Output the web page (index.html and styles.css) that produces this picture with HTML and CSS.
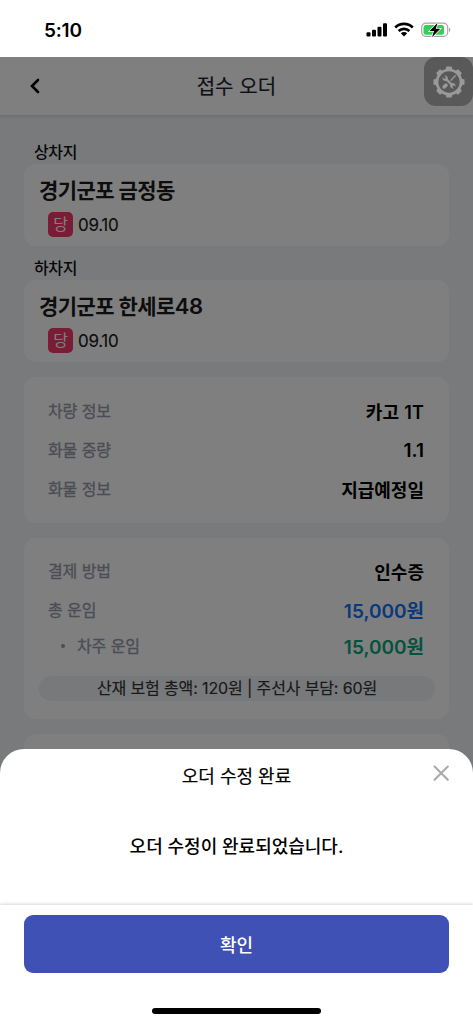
FILE: index.html
```
<!DOCTYPE html>
<html lang="ko">
<head>
<meta charset="utf-8">
<title>접수 오더</title>
<link rel="stylesheet" href="styles.css">
</head>
<body>
<div class="phone">
  <div class="status">
    <span class="time">5:10</span>
    <div class="status-icons">
      <svg width="22" height="14" viewBox="0 0 22 14"><rect x="0.5" y="9.2" width="4" height="4.3" rx="1"/><rect x="6" y="6.8" width="4" height="6.7" rx="1"/><rect x="11.5" y="3.8" width="4" height="9.7" rx="1"/><rect x="17" y="0.2" width="4" height="13.3" rx="1"/></svg>
      <svg class="wifi" width="20" height="15" viewBox="0 0 20 15"><g fill="none" stroke="#000" stroke-width="2.6"><path d="M1.2 5.5C6.1 .7 13.9 .7 18.8 5.5"/><path d="M4.6 9C7.7 6.1 12.3 6.1 15.4 9"/></g><path d="M6.8 11.2C8.6 9.6 11.4 9.6 13.2 11.2L10 14.4Z"/></svg>
      <svg class="battery" width="30" height="16" viewBox="0 0 30 16"><rect x=".7" y="1.2" width="26" height="13.2" rx="4.2" fill="#fff" stroke="#a6a6a6" stroke-width="1.2"/><rect x="2.5" y="3" width="20.5" height="9.7" rx="2.5" fill="#35cd5c"/><path d="M28 5.7V9.9C29 9.5 29.4 8.8 29.4 7.8S29 6.1 28 5.7Z" fill="#a6a6a6"/><path d="M16.7 .7L8.5 9H13L11 15.3L19.3 6.8H14.7Z" stroke="#fff" stroke-width="1.4" paint-order="stroke"/></svg>
    </div>
  </div>

  <div class="app">
    <header class="header">
      <svg class="back" width="10" height="16" viewBox="0 0 10 16"><path d="M8 2L2 8L8 14" fill="none" stroke="#000" stroke-width="2.6" stroke-linecap="round"/></svg>
      <h1 class="title">접수 오더</h1>
    </header>
    <main class="content">
      <h2 class="section-label">상차지</h2>
      <section class="card place">
        <div class="address">경기군포 금정동</div>
        <div class="date-row"><span class="badge">당</span><span class="date">09.10</span></div>
      </section>
      <h2 class="section-label second">하차지</h2>
      <section class="card place">
        <div class="address">경기군포 한세로<span class="num">48</span></div>
        <div class="date-row"><span class="badge">당</span><span class="date">09.10</span></div>
      </section>
      <section class="card info">
        <div class="row"><span class="label">차량 정보</span><span class="value vehicle">카고 1T</span></div>
        <div class="row"><span class="label">화물 중량</span><span class="value weight">1.1</span></div>
        <div class="row"><span class="label">화물 정보</span><span class="value">지급예정일</span></div>
      </section>
      <section class="card payment">
        <div class="row"><span class="label">결제 방법</span><span class="value">인수증</span></div>
        <div class="row"><span class="label">총 운임</span><span class="value money blue">15,000원</span></div>
        <div class="row sub"><span class="label item">차주 운임</span><span class="value money green">15,000원</span></div>
        <div class="insurance">산재 보험 총액: 120원 | 주선사 부담: 60원</div>
      </section>
      <section class="card next"></section>
    </main>
    <div class="overlay"></div>
    <div class="tools">
      <svg width="32" height="32" viewBox="-16 -16 32 32">
        <circle r="12" fill="none" stroke="#999" stroke-width="2.7"/>
        <g fill="#999">
          <path id="tooth" d="M-3.6 -12L-2.6 -15.5H2.6L3.6 -12Z"/>
          <use href="#tooth" transform="rotate(45)"/><use href="#tooth" transform="rotate(90)"/><use href="#tooth" transform="rotate(135)"/><use href="#tooth" transform="rotate(180)"/><use href="#tooth" transform="rotate(225)"/><use href="#tooth" transform="rotate(270)"/><use href="#tooth" transform="rotate(315)"/>
        </g>
        <path d="M-3 -3L4 4" stroke="#999" stroke-width="2.4"/>
        <path d="M-6.5 -4.8L-4.6 -3.1L-3 -4.6L-4.8 -6.5C-2.6 -7 -.6 -5.2 -1.2 -2.7L-2.8 -1.2C-5 -.6 -7 -2.4 -6.5 -4.8ZM6.5 4.8L4.6 3.1L3 4.6L4.8 6.5C2.6 7 .6 5.2 1.2 2.7L2.8 1.2C5 .6 7 2.4 6.5 4.8Z" fill="#999"/>
        <path d="M6.3 -6.3L2 -1.8" stroke="#999" stroke-width="1.3" stroke-linecap="round"/>
        <path d="M-3 3.2L-4.8 4.9" stroke="#999" stroke-width="3.6" stroke-linecap="round"/>
      </svg>
    </div>
  </div>

  <div class="sheet">
    <div class="sheet-head">오더 수정 완료
      <svg class="close" width="16" height="16" viewBox="0 0 16 16"><path d="M1.6 1.6L14.8 14.8M14.8 1.6L1.6 14.8" stroke="#aaa" stroke-width="2.1" stroke-linecap="round"/></svg>
    </div>
    <div class="message">오더 수정이 완료되었습니다.</div>
    <div class="footer">
      <button class="confirm">확인</button>
      <div class="home"></div>
    </div>
  </div>
</div>
</body>
</html>
```
FILE: styles.css
```
* { box-sizing: border-box; }
body { margin: 0; font-family: Inter, "Noto Sans CJK KR", sans-serif; color: #000; background: #fff; }
h1, h2 { margin: 0; }
.phone { position: relative; width: 473px; height: 1024px; overflow: hidden; display: flex; flex-direction: column; }

.status { height: 57px; flex: none; display: flex; justify-content: space-between; padding: 18px 22px 0 44px; }
.time { font-size: 19px; line-height: 25px; font-weight: 600; letter-spacing: -.2px; }
.status-icons { display: flex; align-items: flex-start; padding-top: 5px; }
.wifi { margin: -1px 0 0 6px; }
.battery { margin: -1px 0 0 7px; }

.app { position: relative; flex: 1; background: #f2f4f8; overflow: hidden; }
.header { height: 58px; background: #fff; display: flex; align-items: center; justify-content: center; position: relative; box-shadow: 0 1px 3px rgba(0,0,0,.14); }
.back { position: absolute; left: 30px; top: 21px; }
.title { padding-top: 1px; font-size: 20px; font-weight: 400; line-height: 30px; color: #1c2230; letter-spacing: .1px; -webkit-text-stroke: .2px; }
.content { padding: 26px 24px 0; }
.section-label { font-size: 16px; font-weight: 500; line-height: 23px; padding-left: 10px; letter-spacing: -.4px; color: #111; }
.section-label.second { margin-top: 11px; }
.card { background: #fff; border-radius: 12px; }
.place { height: 82px; padding: 11px 15px 0; }
.address { font-size: 21px; line-height: 32px; font-weight: 600; letter-spacing: -.6px; color: #1a1a1a; }
.num { font-size: 22px; letter-spacing: -.3px; line-height: 1; }
.date-row { display: flex; align-items: center; gap: 5px; height: 25px; margin: 5px 0 0 9px; }
.badge { width: 25px; height: 25px; border-radius: 5px; background: #f5386d; color: #fff; font-size: 16px; line-height: 25px; text-align: center; }
.date { font-size: 17px; color: #1a1a1a; letter-spacing: -.3px; -webkit-text-stroke: .15px; }
.info { margin-top: 15px; height: 146px; padding: 14px 24px; }
.row { display: flex; justify-content: space-between; align-items: center; height: 39px; }
.label { font-size: 16px; line-height: 22px; padding-top: 1px; color: #9698a9; letter-spacing: -.1px; -webkit-text-stroke: .3px; }
.value { font-size: 18px; font-weight: 600; margin-right: 1px; }
.vehicle { letter-spacing: .3px; margin-right: .7px; }
.weight { font-size: 19px; padding-top: 2px; }
.money { font-size: 19px; }
.blue { color: #1470f2; }
.green { color: #0ba57c; }
.payment { margin-top: 15px; height: 181px; padding: 13px 24px 0; }
.sub { height: 33px; }
.item { display: flex; align-items: center; padding-left: 13px; gap: 12px; }
.item::before { content: ""; width: 4px; height: 4px; border-radius: 50%; background: currentColor; }
.insurance { height: 25px; margin: 14px -10px 0 -9px; border-radius: 12px; background: #f0f2f6; color: #333; font-size: 16px; line-height: 24px; letter-spacing: -.13px; text-align: center; white-space: nowrap; -webkit-text-stroke: .15px; }
.next { height: 160px; margin-top: 15px; }
.overlay { position: absolute; inset: 0; background: rgba(0,0,0,.5); }
.tools { position: absolute; right: 0; top: 0; width: 49px; height: 49px; border-radius: 12px; background: #595959; display: flex; align-items: center; justify-content: center; }

.sheet { position: absolute; left: 0; right: 0; bottom: 0; height: 275px; background: #fff; border-radius: 24px 24px 0 0; display: flex; flex-direction: column; }
.sheet-head { height: 54px; padding-top: 1px; line-height: 54px; text-align: center; font-size: 18px; position: relative; -webkit-text-stroke: .2px; }
.close { position: absolute; right: 24px; top: 16px; }
.message { flex: 1; padding-top: 29px; line-height: 30px; text-align: center; font-size: 18px; font-weight: 500; }
.footer { height: 119px; padding: 10px 24px 0; background: #fff; box-shadow: 0 -1px 3px rgba(0,0,0,.16); display: flex; flex-direction: column; align-items: center; }
.confirm { width: 425px; height: 58px; border: 0; border-radius: 9px; background: #3f51b5; color: #fff; font: 500 18px Inter, "Noto Sans CJK KR", sans-serif; }
.home { width: 169px; height: 6px; border-radius: 3px; background: #000; margin-top: 35px; }
```
